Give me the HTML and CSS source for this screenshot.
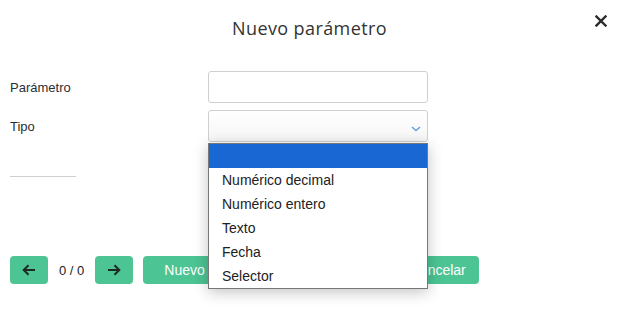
FILE: index.html
```html
<!DOCTYPE html>
<html lang="es">
<head>
<meta charset="utf-8">
<title>Nuevo parámetro</title>
<link rel="stylesheet" href="styles.css">
</head>
<body>
<div class="modal">
  <header class="head">
    <h1 class="title">Nuevo parámetro</h1>
    <button class="close" aria-label="Cerrar">
      <svg width="12" height="12" viewBox="0 0 12 12"><path d="M1.5 1.5 L10.5 10.5 M10.5 1.5 L1.5 10.5" stroke="#2b2b2b" stroke-width="2.4" stroke-linecap="square"/></svg>
    </button>
  </header>
  <div class="form">
    <label class="label">Parámetro</label>
    <div class="input"></div>
    <label class="label">Tipo</label>
    <div class="select-wrap">
      <div class="select">
        <svg class="chev" width="10" height="6" viewBox="0 0 10 6"><path d="M1 1 L5 4.6 L9 1" fill="none" stroke="#6a9fdf" stroke-width="1.5"/></svg>
      </div>
      <ul class="menu">
        <li class="opt sel">&nbsp;</li>
        <li class="opt">Numérico decimal</li>
        <li class="opt">Numérico entero</li>
        <li class="opt">Texto</li>
        <li class="opt">Fecha</li>
        <li class="opt">Selector</li>
      </ul>
    </div>
  </div>
  <div class="rule"></div>
  <div class="footer">
    <button class="btn icon" aria-label="Anterior">
      <svg width="14" height="12" viewBox="0 0 14 12"><path d="M13 6 H2 M6.5 1.2 L1.7 6 L6.5 10.8" fill="none" stroke="#1d2a24" stroke-width="2"/></svg>
    </button>
    <span class="count">0 / 0</span>
    <button class="btn icon" aria-label="Siguiente">
      <svg width="14" height="12" viewBox="0 0 14 12"><path d="M1 6 H12 M7.5 1.2 L12.3 6 L7.5 10.8" fill="none" stroke="#1d2a24" stroke-width="2"/></svg>
    </button>
    <button class="btn text">Nuevo</button>
    <button class="btn text wide">Guardar</button>
    <button class="btn text tight">Cancelar</button>
  </div>
</div>
</body>
</html>
```

FILE: styles.css
```css
* { box-sizing: border-box; }
html, body { margin: 0; padding: 0; background: #fff; }
body { font-family: "Liberation Sans", Arial, sans-serif; color: #222; }

.modal { width: 619px; height: 309px; position: relative; }

.head {
  height: 56px;
  display: flex;
  align-items: center;
  justify-content: center;
  position: relative;
}
.title {
  margin: 0;
  font-family: "Open Sans", sans-serif;
  font-weight: 400;
  font-size: 18px;
  letter-spacing: 0.4px;
  color: #333;
}
.close {
  position: absolute;
  right: 12px;
  top: 15px;
  width: 12px;
  height: 12px;
  padding: 0;
  border: 0;
  background: none;
  display: flex;
}

.form {
  margin-top: 15px;
  padding-left: 10px;
  display: grid;
  grid-template-columns: 198px 220px;
  row-gap: 7px;
  align-items: center;
}
.label { font-size: 13px; color: #2b2f33; }
.input, .select {
  height: 32px;
  border: 1px solid #cfcfcf;
  border-radius: 3px;
  background: #fff;
}
.select-wrap { position: relative; }
.select {
  display: flex;
  align-items: center;
  justify-content: flex-end;
  padding-right: 6px;
  padding-top: 5px;
  background: linear-gradient(#fff, #f6f6f6);
}
.menu {
  position: absolute;
  left: 0;
  top: calc(100% + 1px);
  width: 220px;
  margin: 0;
  padding: 0;
  list-style: none;
  border: 1px solid #777;
  background: #fff;
  box-shadow: 0 3px 14px rgba(0,0,0,0.24);
  z-index: 5;
}
.opt {
  height: 24px;
  line-height: 24px;
  padding-left: 13px;
  font-size: 14px;
  color: #222;
}
.opt.sel { background: #1967d2; }

.rule {
  width: 66px;
  height: 1px;
  background: #cfcfcf;
  margin: 34px 0 0 10px;
}

.footer {
  margin-top: 79px;
  padding-left: 10px;
  display: flex;
  align-items: center;
  gap: 10px;
}
.btn {
  height: 28px;
  border: 0;
  border-radius: 4px;
  background: #4cc494;
  color: #fff;
  font-family: "Liberation Sans", Arial, sans-serif;
  font-size: 14px;
  display: flex;
  align-items: center;
  justify-content: center;
  padding: 0;
}
.btn.icon { width: 38px; }
.btn.text { padding: 0 21px; }
.btn.wide { width: 151px; }
.btn.tight { padding: 0 13px; width: 82px; }
.count { font-size: 13px; color: #222; padding: 0 1px; }
```
